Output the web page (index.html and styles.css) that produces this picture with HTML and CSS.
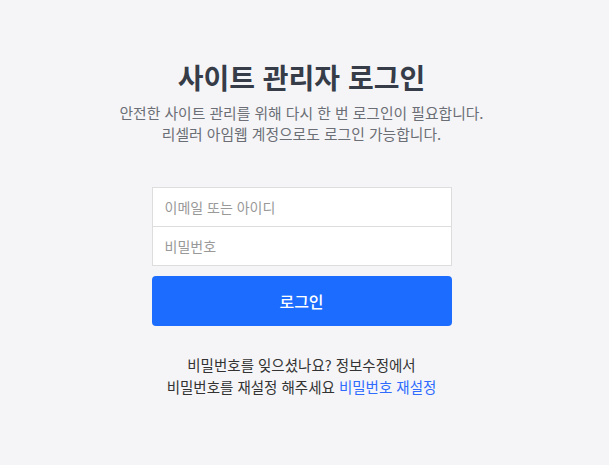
FILE: index.html
```html
<!DOCTYPE html>
<html lang="ko">
<head>
    <meta charset="UTF-8">
    <meta name="viewport" content="width=device-width, initial-scale=1.0">
    <title>사이트 관리자 로그인</title>
    <link rel="stylesheet" href="styles.css">
</head>
<body>
    <div class="login">
        <h1 class="login-title">사이트 관리자 로그인</h1>
        <p class="login-desc">안전한 사이트 관리를 위해 다시 한 번 로그인이 필요합니다.<br>리셀러 아임웹 계정으로도 로그인 가능합니다.</p>

        <form class="login-form">
            <div class="field-group">
                <input type="text" class="field" placeholder="이메일 또는 아이디">
                <input type="password" class="field" placeholder="비밀번호">
            </div>
            <button type="button" class="login-btn">로그인</button>
        </form>

        <p class="login-help">비밀번호를 잊으셨나요? 정보수정에서<br>비밀번호를 재설정 해주세요 <a href="#" class="help-link">비밀번호 재설정</a></p>
    </div>
</body>
</html>
```

FILE: styles.css
```css
body {
    margin: 0;
    background-color: #f5f5f7;
    font-family: "Noto Sans CJK KR", "Noto Sans", sans-serif;
    color: #333;
}
.login {
    display: flex;
    flex-direction: column;
    align-items: center;
    padding: 57px 6px 0 0;
}
.login-title {
    margin: 0;
    font-size: 28px;
    font-weight: 700;
    line-height: 40px;
    color: #363c48;
}
.login-desc {
    margin: 5px 0 0;
    font-size: 14.8px;
    line-height: 21px;
    color: #6b6e75;
    text-align: center;
}
.login-form {
    width: 300px;
    margin-top: 43px;
}
.field-group {
    display: flex;
    flex-direction: column;
    background-color: #fff;
    border: 1px solid #ddd;
}
.field {
    height: 38px;
    padding: 0 12px;
    border: none;
    font-family: inherit;
    font-size: 14px;
    color: #333;
    outline: none;
}
.field + .field {
    border-top: 1px solid #ddd;
}
.field::placeholder {
    color: #999;
}
.login-btn {
    display: block;
    width: 100%;
    height: 50px;
    margin-top: 10px;
    border: none;
    border-radius: 4px;
    background-color: #1c6dff;
    color: #fff;
    font-family: inherit;
    font-size: 16px;
    font-weight: 500;
    cursor: pointer;
}
.login-help {
    margin: 28px 0 0;
    font-size: 14.5px;
    line-height: 22px;
    text-align: center;
    color: #333;
}
.help-link {
    color: #2f6bff;
    text-decoration: none;
}
```
